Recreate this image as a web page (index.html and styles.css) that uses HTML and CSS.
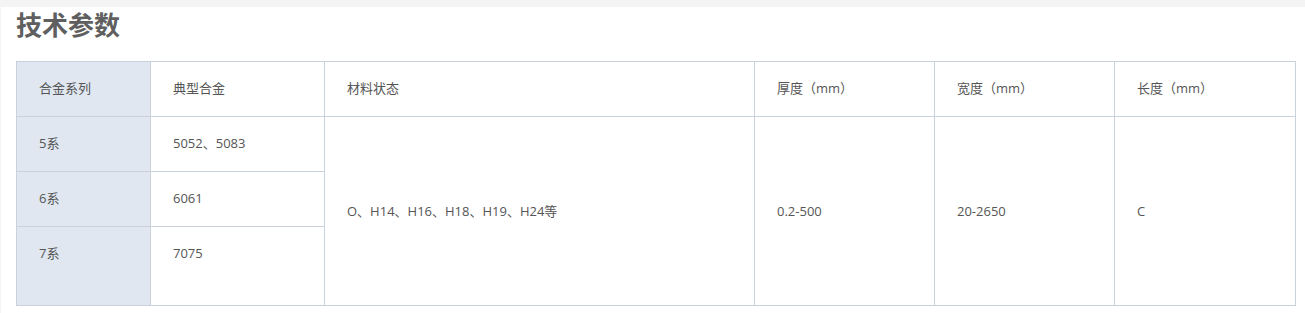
FILE: index.html
```html
<!DOCTYPE html>
<html lang="zh-CN">
<head>
<meta charset="utf-8">
<title>技术参数</title>
<link rel="stylesheet" href="styles.css">
</head>
<body>
<div class="page">
  <h2 class="title">技术参数</h2>
  <table class="spec">
    <colgroup>
      <col class="c1"><col class="c2"><col class="c3"><col class="c4"><col class="c5"><col class="c6">
    </colgroup>
    <tr class="row">
      <td class="series">合金系列</td>
      <td>典型合金</td>
      <td>材料状态</td>
      <td>厚度（mm）</td>
      <td>宽度（mm）</td>
      <td>长度（mm）</td>
    </tr>
    <tr class="row">
      <td class="series">5系</td>
      <td>5052、5083</td>
      <td class="mid" rowspan="3">O、H14、H16、H18、H19、H24等</td>
      <td class="mid" rowspan="3">0.2-500</td>
      <td class="mid" rowspan="3">20-2650</td>
      <td class="mid" rowspan="3">C</td>
    </tr>
    <tr class="row">
      <td class="series">6系</td>
      <td>6061</td>
    </tr>
    <tr class="row last">
      <td class="series">7系</td>
      <td>7075</td>
    </tr>
  </table>
</div>
</body>
</html>
```

FILE: styles.css
```css
html, body {
  margin: 0;
  padding: 0;
  background: #f4f4f4;
}
body {
  font-family: "Noto Sans CJK SC", "Noto Sans", sans-serif;
  color: #595959;
}
.page {
  background: #fff;
  margin: 7px 0 0 1px;
  padding: 0 9px 8px 15px;
  height: 306px;
  box-sizing: border-box;
}
.title {
  margin: 0 0 20px;
  font-size: 26px;
  line-height: 34px;
  font-weight: 700;
  color: #5f5f5f;
}
.spec {
  border-collapse: collapse;
  table-layout: fixed;
  width: 1280px;
  font-family: "Open Sans", "Noto Sans CJK SC", sans-serif;
  font-size: 13px;
  line-height: 17px;
  color: #555;
}
.spec td {
  border: 1px solid #c9d1dc;
  padding: 18px 10px 0 22px;
  vertical-align: top;
  white-space: nowrap;
}
.spec .row { height: 55px; }
.spec .row.last { height: 79px; }
.spec td.mid { vertical-align: middle; padding-top: 0; }
.spec td.series { background: #e0e7f1; }
.c1 { width: 134px; }
.c2 { width: 174px; }
.c3 { width: 430px; }
.c4 { width: 180px; }
.c5 { width: 180px; }
.c6 { width: 181px; }
```
